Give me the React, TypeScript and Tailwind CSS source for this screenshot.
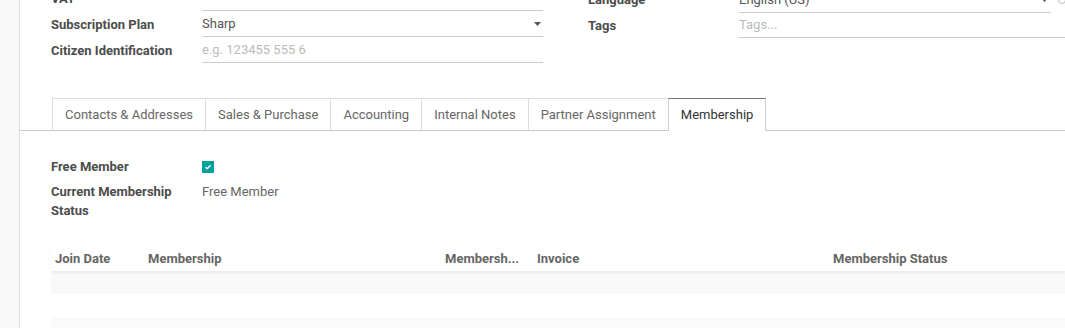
import React from 'react'

type Field = { label: string; value?: string; placeholder?: string; select?: boolean }

const leftFields: Field[] = [
  { label: 'VAT', value: '' },
  { label: 'Subscription Plan', value: 'Sharp', select: true },
  { label: 'Citizen Identification', placeholder: 'e.g. 123455 555 6' },
]

const tabs = ['Contacts & Addresses', 'Sales & Purchase', 'Accounting', 'Internal Notes', 'Partner Assignment', 'Membership']

// columnas de la lista de membresías
const columns = [
  { label: 'Join Date', w: 'w-[93px]' },
  { label: 'Membership', w: 'w-[297px]' },
  { label: 'Membersh...', w: 'w-[92px]' },
  { label: 'Invoice', w: 'w-[296px]' },
  { label: 'Membership Status', w: 'flex-1' },
]

function Caret() {
  return (
    <svg width="7" height="4" viewBox="0 0 7 4" className="shrink-0">
      <path d="M0 0h7L3.5 4z" fill="#555" />
    </svg>
  )
}

function FieldRow({ f }: { f: Field }) {
  return (
    <div className="flex h-[26px] shrink-0">
      <div className="w-[151px] shrink-0 flex items-center font-bold text-[#4c4c4c]">{f.label}</div>
      <div className="w-[341px] h-[25px] border-b border-[#ccc] flex items-center justify-between pr-[2px]">
        {f.placeholder
          ? <span className="text-[#bbb]">{f.placeholder}</span>
          : <span className="text-[#555]">{f.value}</span>}
        {f.select && <Caret />}
      </div>
    </div>
  )
}

export default function App() {
  return (
    <div className="flex w-[1065px] h-[328px] overflow-hidden bg-white font-['Roboto',sans-serif] text-[13px]">
      <div className="w-[20px] shrink-0 bg-[#f9f9f9] border-r border-[#dcdcdc]" />
      <div className="flex-1 flex flex-col min-w-0">
        {/* Cabecera del formulario */}
        <div className="flex shrink-0 -mt-[14px] pl-[31px]">
          <div className="flex flex-col">
            {leftFields.map(f => <FieldRow key={f.label} f={f} />)}
          </div>
          <div className="flex flex-col ml-[45px] mt-[1px] flex-1">
            <div className="flex h-[26px] shrink-0">
              <div className="w-[151px] shrink-0 flex items-center font-bold text-[#4c4c4c]">Language</div>
              <div className="flex-1 flex items-center">
                <div className="w-[312px] h-[26px] border-b border-[#ccc] flex items-center justify-between pr-[3px]">
                  <span className="text-[#555]">English (US)</span>
                  <Caret />
                </div>
                <span className="ml-[7px] w-[8px] h-[8px] rounded-full border border-[#bbb]" />
              </div>
            </div>
            <div className="flex h-[25px] shrink-0">
              <div className="w-[151px] shrink-0 flex items-center font-bold text-[#4c4c4c]">Tags</div>
              <div className="flex-1 h-[25px] border-b border-[#ccc] flex items-center">
                <span className="text-[#bbb]">Tags...</span>
              </div>
            </div>
          </div>
        </div>

        {/* Pestañas */}
        <div className="mt-[34px] shrink-0 flex border-b border-[#ccc] pl-[32px] h-[33px]">
          {tabs.map((t, i) => {
            const active = i === tabs.length - 1
            return (
              <div
                key={t}
                className={
                  active
                    ? 'px-[12px] flex items-center border-x border-t border-t-[#777] border-x-[#ccc] bg-white -mb-px text-[#333]'
                    : 'px-[12px] flex items-center border-l border-t border-[#ddd] text-[#666]'
                }
              >
                {t}
              </div>
            )
          })}
        </div>

        {/* Contenido de Membership */}
        <div className="pl-[31px] pt-[26px] shrink-0">
          <div className="flex h-[20px] items-center">
            <div className="w-[151px] font-bold text-[#4c4c4c]">Free Member</div>
            <div className="w-[12px] h-[12px] bg-[#00a09d] flex items-center justify-center">
              <svg width="8" height="8" viewBox="0 0 8 8">
                <path d="M1.5 4.2l1.7 1.6L6.6 2.2" stroke="white" strokeWidth="1.3" fill="none" />
              </svg>
            </div>
          </div>
          <div className="flex mt-[5px] leading-[19px]">
            <div className="w-[151px] pr-[20px] font-bold text-[#4c4c4c]">Current Membership Status</div>
            <div className="text-[#666]">Free Member</div>
          </div>

          {/* Lista */}
          <div className="mt-[27px] flex flex-col">
            <div className="flex h-[24px] shrink-0 items-center font-bold text-[#666] shadow-[0_2px_3px_rgba(0,0,0,0.06)] relative">
              {columns.map(c => (
                <div key={c.label} className={`${c.w} pl-[4px] pr-[3px] truncate`}>{c.label}</div>
              ))}
            </div>
            <div className="h-[23px] shrink-0 bg-[#f8f8f8]" />
            <div className="h-[23px] shrink-0 bg-white" />
            <div className="h-[23px] shrink-0 bg-[#fafafa]" />
          </div>
        </div>
      </div>
    </div>
  )
}
